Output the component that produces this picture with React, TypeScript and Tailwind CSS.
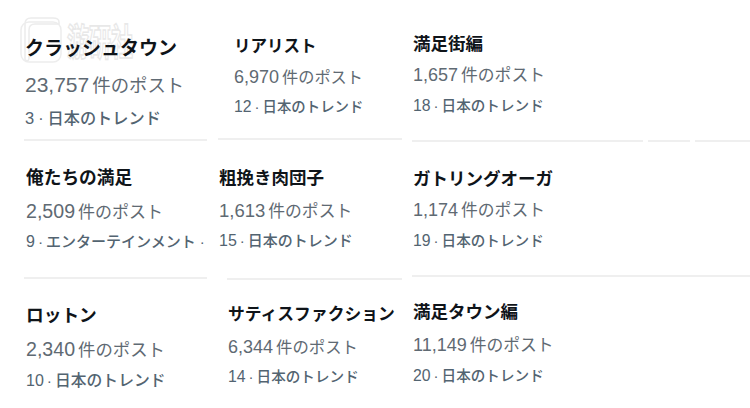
import React from "react";

const FONT = { fontFamily: '"Liberation Sans", "Noto Sans CJK JP", sans-serif' };

function Divider({ className }: { className: string }) {
  return <div className={"h-[2px] bg-[#efefef] " + className} />;
}

function Count({ n, numCls, kanaCls, boxCls }: { n: string; numCls: string; kanaCls: string; boxCls: string }) {
  return (
    <div className={"text-[#5f6a73] whitespace-nowrap flex items-baseline " + boxCls}>
      <span className={numCls}>{n}</span>
      <span className={"ml-[3px] " + kanaCls}>件のポスト</span>
    </div>
  );
}

function Trend({ n, label, numCls, kanaCls, boxCls, dotCls }: { n: string; label: string; numCls: string; kanaCls: string; boxCls: string; dotCls: string }) {
  return (
    <div className={"text-[#536471] font-medium whitespace-nowrap flex items-baseline " + boxCls}>
      <span className={numCls}>{n}</span>
      <span className={dotCls}>·</span>
      <span className={kanaCls}>{label}</span>
    </div>
  );
}

export default function App() {
  return (
    <div className="relative w-[750px] h-[408px] bg-white overflow-hidden" style={FONT}>
      {/* watermark */}
      <div className="absolute left-[19px] top-[14px] flex items-start gap-[2px] pointer-events-none">
        <svg width="46" height="50" viewBox="0 0 46 50" fill="none">
          <path d="M6 10 Q6 4 12 4 L34 4 Q40 4 40 8 L40 10 L16 10 Q10 10 10 16 L10 44 Q10 48 6 46 Z" stroke="#ececec" strokeWidth="1.5" />
          <rect x="2" y="8" width="40" height="40" rx="8" stroke="#ededed" strokeWidth="1.5" />
        </svg>
        <div
          className="text-[22px] font-bold leading-none text-white mt-[6px] origin-top scale-y-[1.7] [-webkit-text-stroke:1px_#e8e8e8]"
          style={{ fontFamily: '"Noto Sans CJK SC", sans-serif' }}
        >
          游研社
        </div>
      </div>

      <div className="relative flex">
        {/* column 1 */}
        <div className="ml-[24px] w-[183px] flex flex-col overflow-hidden">
          <div className="pl-[1px] pt-[37px] pb-[9px]">
            <div className="text-[19px] leading-[24px] font-bold text-[#0f1419] whitespace-nowrap">クラッシュタウン</div>
            <Count n="23,757" boxCls="mt-[10px] h-[28px] leading-[28px]" numCls="text-[21px]" kanaCls="text-[18.4px]" />
            <Trend n="3" label="日本のトレンド" boxCls="mt-[7px] h-[24px] leading-[24px]" numCls="text-[16.5px]" dotCls="mx-[4px] text-[16px]" kanaCls="text-[16.2px]" />
          </div>
          <Divider className="w-[183px]" />
          <div className="pl-[2px] pt-[25px] pb-[23px]">
            <div className="text-[17.7px] leading-[24px] font-bold text-[#0f1419] whitespace-nowrap">俺たちの満足</div>
            <Count n="2,509" boxCls="mt-[7px] h-[28px] leading-[28px]" numCls="text-[19.6px]" kanaCls="text-[17px]" />
            <Trend n="9" label="エンターテインメント ·" boxCls="mt-[5px] h-[24px] leading-[24px]" numCls="text-[16px]" dotCls="mx-[3px] text-[15.5px]" kanaCls="text-[15px]" />
          </div>
          <Divider className="w-[183px]" />
          <div className="pl-[2px] pt-[25px]">
            <div className="text-[17.7px] leading-[24px] font-bold text-[#0f1419] whitespace-nowrap">ロットン</div>
            <Count n="2,340" boxCls="mt-[7px] h-[28px] leading-[28px]" numCls="text-[19.6px]" kanaCls="text-[17.4px]" />
            <Trend n="10" label="日本のトレンド" boxCls="mt-[6px] h-[24px] leading-[24px]" numCls="text-[16px]" dotCls="mx-[3px] text-[15.5px]" kanaCls="text-[15.8px]" />
          </div>
        </div>

        {/* column 2 */}
        <div className="ml-[11px] w-[184px] flex flex-col">
          <div className="pl-[16px] pt-[35px] pb-[21px]">
            <div className="text-[16.5px] leading-[22px] font-bold text-[#0f1419] whitespace-nowrap">リアリスト</div>
            <Count n="6,970" boxCls="mt-[8px] h-[24px] leading-[24px]" numCls="text-[18px]" kanaCls="text-[16.2px]" />
            <Trend n="12" label="日本のトレンド" boxCls="mt-[8px] h-[20px] leading-[20px]" numCls="text-[15.8px]" dotCls="mx-[3px] text-[15px]" kanaCls="text-[14.4px]" />
          </div>
          <Divider className="w-[184px]" />
          <div className="pl-[1px] pt-[27px] pb-[27px]">
            <div className="text-[17.5px] leading-[22px] font-bold text-[#0f1419] whitespace-nowrap">粗挽き肉団子</div>
            <Count n="1,613" boxCls="mt-[10px] h-[24px] leading-[24px]" numCls="text-[18.5px]" kanaCls="text-[16.8px]" />
            <Trend n="15" label="日本のトレンド" boxCls="mt-[8px] h-[20px] leading-[20px]" numCls="text-[16px]" dotCls="mx-[3px] text-[15px]" kanaCls="text-[15px]" />
          </div>
          <Divider className="ml-[9px] w-[175px]" />
          <div className="pl-[10px] pt-[24px]">
            <div className="text-[16.8px] leading-[22px] font-bold text-[#0f1419] whitespace-nowrap">サティスファクション</div>
            <Count n="6,344" boxCls="mt-[9px] h-[24px] leading-[24px]" numCls="text-[18px]" kanaCls="text-[16.4px]" />
            <Trend n="14" label="日本のトレンド" boxCls="mt-[8px] h-[20px] leading-[20px]" numCls="text-[15.8px]" dotCls="mx-[3px] text-[15px]" kanaCls="text-[14.6px]" />
          </div>
        </div>

        {/* column 3 */}
        <div className="ml-[10px] flex-1 flex flex-col">
          <div className="pl-[1px] pt-[33px] pb-[24px]">
            <div className="text-[17.5px] leading-[22px] font-bold text-[#0f1419] whitespace-nowrap">満足街編</div>
            <Count n="1,657" boxCls="mt-[8px] h-[24px] leading-[24px]" numCls="text-[18px]" kanaCls="text-[16.8px]" />
            <Trend n="18" label="日本のトレンド" boxCls="mt-[9px] h-[20px] leading-[20px]" numCls="text-[15.8px]" dotCls="mx-[3px] text-[15px]" kanaCls="text-[14.6px]" />
          </div>
          <div className="flex gap-[5px]">
            <Divider className="w-[231px]" />
            <Divider className="w-[42px]" />
            <Divider className="flex-1" />
          </div>
          <div className="pl-[1px] pt-[26px] pb-[24px]">
            <div className="text-[17.5px] leading-[22px] font-bold text-[#0f1419] whitespace-nowrap">ガトリングオーガ</div>
            <Count n="1,174" boxCls="mt-[8px] h-[24px] leading-[24px]" numCls="text-[18px]" kanaCls="text-[16.8px]" />
            <Trend n="19" label="日本のトレンド" boxCls="mt-[9px] h-[20px] leading-[20px]" numCls="text-[15.8px]" dotCls="mx-[3px] text-[15px]" kanaCls="text-[14.6px]" />
          </div>
          <Divider className="w-full" />
          <div className="pl-[1px] pt-[24px]">
            <div className="text-[17.5px] leading-[22px] font-bold text-[#0f1419] whitespace-nowrap">満足タウン編</div>
            <Count n="11,149" boxCls="mt-[10px] h-[24px] leading-[24px]" numCls="text-[18px]" kanaCls="text-[16.8px]" />
            <Trend n="20" label="日本のトレンド" boxCls="mt-[9px] h-[20px] leading-[20px]" numCls="text-[15.8px]" dotCls="mx-[3px] text-[15px]" kanaCls="text-[14.6px]" />
          </div>
        </div>
      </div>
    </div>
  );
}
